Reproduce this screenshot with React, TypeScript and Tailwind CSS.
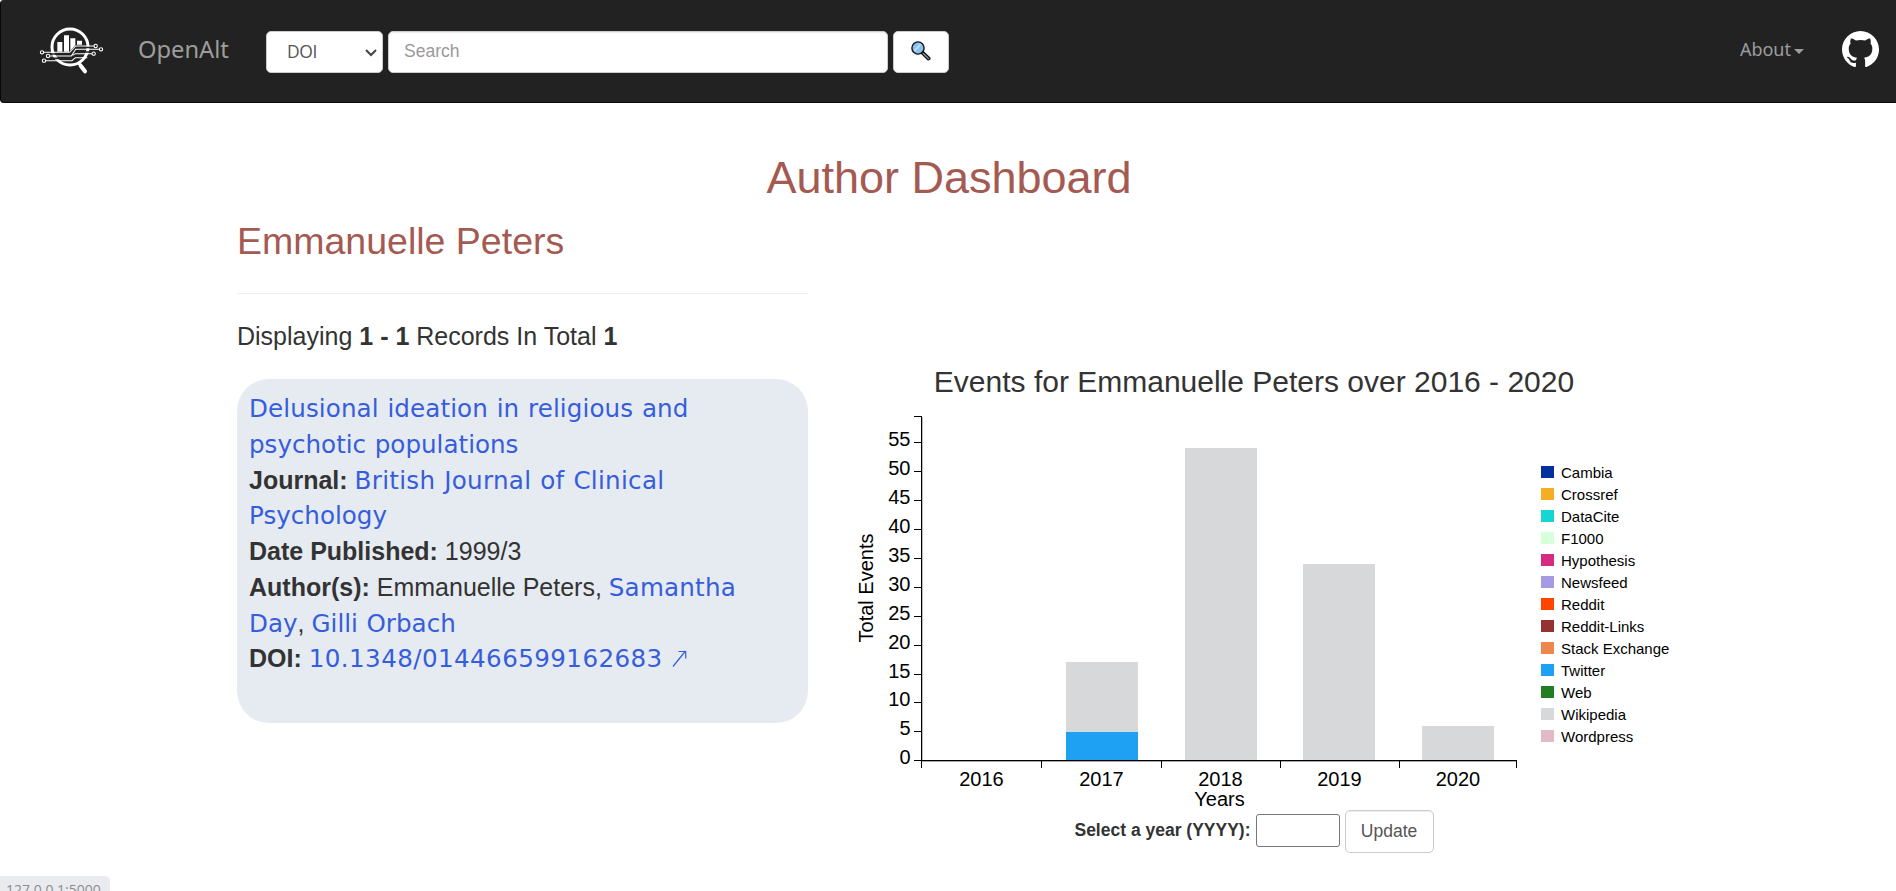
import React from "react";

const LINK = "font-['DejaVu_Sans',Verdana,sans-serif] text-[24.6px] leading-[0px] [word-spacing:0.8px] text-[#365ddc]";

const legend: [string, string][] = [
  ["Cambia", "#03309c"],
  ["Crossref", "#f4ae23"],
  ["DataCite", "#16d5d2"],
  ["F1000", "#d6ffdc"],
  ["Hypothesis", "#d52b80"],
  ["Newsfeed", "#a79ae4"],
  ["Reddit", "#ff4500"],
  ["Reddit-Links", "#953233"],
  ["Stack Exchange", "#ee874d"],
  ["Twitter", "#1ea1f3"],
  ["Web", "#237d22"],
  ["Wikipedia", "#d7d8da"],
  ["Wordpress", "#e2b9c8"],
];

const bars = [
  { x: 1066, top: 662, bottom: 732, fill: "#d7d8da" },
  { x: 1066, top: 732, bottom: 760, fill: "#1ea1f3" },
  { x: 1185, top: 448, bottom: 760, fill: "#d7d8da" },
  { x: 1303, top: 564, bottom: 760, fill: "#d7d8da" },
  { x: 1422, top: 726, bottom: 760, fill: "#d7d8da" },
];

const yTicks = [760, 731, 702, 674, 645, 616, 587, 558, 529, 500, 471, 442];
const xTicks = [921, 1041, 1161, 1280, 1399, 1516];
const years: [string, number][] = [
  ["2016", 981.5],
  ["2017", 1101.5],
  ["2018", 1220.5],
  ["2019", 1339.5],
  ["2020", 1458],
];

function Logo() {
  return (
    <svg className="h-[50px] w-[72px] shrink-0" viewBox="108 75 216 150" fill="none" stroke="#fff">
      <circle cx="210" cy="141" r="54" strokeWidth="9" />
      <path d="M236 190l7 6" strokeWidth="9" />
      <path d="M242 197l13 17" strokeWidth="12" strokeLinecap="round" />
      <g fill="#fff" stroke="none">
        <path d="M172 126h15v29h-15zM192 106h15v49h-15zM211 115h15v20l-15 17zM231 122h15v12h-15z" />
      </g>
      <path d="M150 162h59l20-20h60M138 175h74l17-19h50" stroke="#222" strokeWidth="5" />
      <g strokeWidth="3.2">
        <path d="M132 157h77l18-19h55M150 168h64l13-20h71M218 166l8-5h50M138 182h78l10-9h36" />
        <circle cx="126" cy="157" r="5" />
        <circle cx="144" cy="168" r="5" />
        <circle cx="132" cy="182" r="5" />
        <circle cx="287" cy="138" r="5" />
        <circle cx="303" cy="148" r="5" />
        <circle cx="281" cy="161" r="5" />
      </g>
    </svg>
  );
}

function SearchGlyph() {
  return (
    <svg className="h-5 w-5" viewBox="0 0 20 20" fill="none">
      <path d="M10.5 12.5l2-1.8 6.2 6c.9 1-.8 2.9-1.9 2z" fill="#64737c" stroke="#111" strokeWidth="1.2" />
      <path d="M12.2 12.6l5.2 5" stroke="#93a3ad" strokeWidth="1" />
      <circle cx="7" cy="7" r="6.1" fill="#87c1f0" stroke="#151515" strokeWidth="1.4" />
      <path d="M2.8 8.9L9 2.4l1.6 1L4 10.8z" fill="#b9dcf8" />
    </svg>
  );
}

function Navbar() {
  return (
    <header className="flex h-[103px] w-full items-start rounded-l border-b border-l border-[#080808] bg-[#222]">
      <div className="ml-[35px] mt-[25px] flex shrink-0">
        <Logo />
      </div>
      <span className="ml-[30px] mt-[32px] w-[96px] whitespace-nowrap font-['Noto_Sans',sans-serif] text-[23.7px] leading-[34px] text-[#9d9d9d]">
        OpenAlt
      </span>
      <div className="ml-[32px] mt-[31px] flex gap-[5px]">
        <div className="flex h-[42px] w-[117px] items-center justify-between rounded-[5px] border border-[#ccc] bg-white pl-5 pr-[5px] font-['Open_Sans',sans-serif] text-[17.5px] text-[#555]">
          <span className="-mt-0.5 tracking-[-0.4px]">DOI</span>
          <svg className="mt-0.5 h-3 w-3" viewBox="0 0 12 12" fill="none" stroke="#444" strokeWidth="2">
            <path d="M1 3l5 5 5-5" />
          </svg>
        </div>
        <input
          placeholder="Search"
          className="h-[42px] w-[500px] rounded-[5px] border border-[#ccc] bg-white px-[15px] pb-0.5 text-[17.5px] shadow-[inset_0_1px_1px_rgba(0,0,0,0.075)] placeholder:text-[#999]"
        />
        <button className="flex h-[42px] w-[56px] items-center justify-center rounded-[5px] border border-[#ccc] bg-white pb-0.5">
          <SearchGlyph />
        </button>
      </div>
      <div className="ml-auto mr-[17px] mt-[31px] flex">
        <span className="mt-[5px] font-['Noto_Sans',sans-serif] text-[18px] leading-[27px] text-[#9d9d9d]">About</span>
        <svg className="ml-[3px] mt-[18px] h-[5px] w-[10px]" viewBox="0 0 10 5">
          <path d="M0 0h10L5 5z" fill="#9d9d9d" />
        </svg>
        <svg className="ml-[38px] h-[37px] w-[37px]" viewBox="0 0 16 16" fill="#fff">
          <path d="M8 0C3.58 0 0 3.58 0 8c0 3.54 2.29 6.53 5.47 7.59.4.07.55-.17.55-.38 0-.19-.01-.82-.01-1.49-2.01.37-2.53-.49-2.69-.94-.09-.23-.48-.94-.82-1.13-.28-.15-.68-.52-.01-.53.63-.01 1.08.58 1.23.82.72 1.21 1.87.87 2.33.66.07-.52.28-.87.51-1.07-1.78-.2-3.64-.89-3.64-3.95 0-.87.31-1.59.82-2.15-.08-.2-.36-1.02.08-2.12 0 0 .67-.21 2.2.82.64-.18 1.32-.27 2-.27s1.36.09 2 .27c1.53-1.04 2.2-.82 2.2-.82.44 1.1.16 1.92.08 2.12.51.56.82 1.27.82 2.15 0 3.07-1.87 3.75-3.65 3.95.29.25.54.73.54 1.48 0 1.07-.01 1.93-.01 2.2 0 .21.15.46.55.38A8.01 8.01 0 0 0 16 8c0-4.42-3.58-8-8-8z" />
        </svg>
      </div>
    </header>
  );
}

function Record() {
  return (
    <article className="mt-[25px] h-[344px] w-[571px] whitespace-nowrap rounded-[32px] bg-[#e6ebf2] pl-3 pt-3 text-[25px] leading-[35.75px]">
      <a className={`${LINK} tracking-[0.1px]`}>Delusional ideation in religious and</a>
      <br />
      <a className={LINK}>psychotic populations</a>
      <br />
      <b>Journal:</b> <a className={`${LINK} tracking-[0.29px]`}>British Journal of Clinical</a>
      <br />
      <a className={LINK}>Psychology</a>
      <br />
      <b>Date Published:</b> 1999/3
      <br />
      <b>Author(s):</b> Emmanuelle Peters, <a className={`${LINK} tracking-[0.2px]`}>Samantha</a>
      <br />
      <a className={LINK}>Day</a>, <a className={LINK}>Gilli Orbach</a>
      <br />
      <b>DOI:</b> <a className={`${LINK} tracking-[0.4px]`}>10.1348/014466599162683</a>
      <svg className="ml-[9px] inline-block h-[17px] w-[15px] align-baseline" viewBox="0 0 15 17" fill="none" stroke="#365ddc" strokeWidth="1.2">
        <path d="M1 16.5L13.5 1M6.5 1.5h7.2v7" />
      </svg>
    </article>
  );
}

function Chart() {
  return (
    <svg className="block h-[406px] w-[832px]" viewBox="843 404 832 406" fontSize="20" fill="#000">
      {bars.map((b, i) => (
        <rect key={i} x={b.x} y={b.top} width="72" height={b.bottom - b.top} fill={b.fill} />
      ))}
      <g shapeRendering="crispEdges">
        <path d="M922 417h1v343h-1z" fill="#bbb" />
        <path d="M921 761h596v1H921z" fill="#aaa" />
        <path d="M921 416h1v345h-1zM921 760h596v1H921z" />
        <path d="M914 416h8v1h-8z" />
        {yTicks.map((y) => (
          <rect key={y} x="914" y={y} width="8" height="1" />
        ))}
        {xTicks.map((x) => (
          <rect key={x} x={x} y="760" width="1" height="8" />
        ))}
      </g>
      {yTicks.map((y, i) => (
        <text key={y} x="910.5" y={y + 4} textAnchor="end">
          {i * 5}
        </text>
      ))}
      {years.map(([label, x]) => (
        <text key={label} x={x} y="786" textAnchor="middle">
          {label}
        </text>
      ))}
      <text x="1219.5" y="806" textAnchor="middle">
        Years
      </text>
      <text transform="translate(873 588) rotate(-90)" textAnchor="middle">
        Total Events
      </text>
      {legend.map(([label, color], i) => (
        <g key={label}>
          <rect x="1541" y={466 + i * 22} width="13" height="12" fill={color} />
          <text x="1561" y={478 + i * 22} fontSize="15">
            {label}
          </text>
        </g>
      ))}
    </svg>
  );
}

export default function App() {
  return (
    <div className="flex h-[891px] w-full flex-col overflow-hidden bg-white font-['Liberation_Sans',Arial,sans-serif] text-[#333]">
      <Navbar />
      <main className="flex-1 pl-[239px] pr-[237px]">
        <h1 className="mt-[50px] text-center text-[45px] leading-[50px] text-[#a45a52]">Author Dashboard</h1>
        <div className="-ml-0.5 flex items-start">
          <section className="w-[571px] shrink-0">
            <h2 className="mt-[18px] text-[37.5px] leading-[41px] text-[#a45a52]">Emmanuelle Peters</h2>
            <hr className="mt-[31px] border-[#eee]" />
            <p className="mt-[24px] text-[25px] leading-[36px]">
              Displaying <b>1 - 1</b> Records In Total <b>1</b>
            </p>
            <Record />
          </section>
          <section className="ml-[35px] mt-[162px] flex w-[822px] shrink-0 flex-col items-center">
            <h3 className="text-[30px] leading-[33px]">Events for Emmanuelle Peters over 2016 - 2020</h3>
            <div className="mt-1.5 w-[822px]">
              <Chart />
            </div>
            <form className="flex items-center text-[17.5px]">
              <label className="mr-[5px] pb-0.5 font-bold">Select a year (YYYY):</label>
              <input className="mb-[3px] h-[33px] w-[84px] rounded-[3px] border border-[#767676] bg-white" />
              <button type="button" className="ml-[5px] h-[43px] w-[89px] rounded-[5px] border border-[#ccc] bg-white text-[#555] shadow-[inset_0_1px_1px_rgba(0,0,0,0.075)]">
                Update
              </button>
            </form>
          </section>
        </div>
      </main>
      <div className="fixed bottom-0 left-0 h-[15px] w-[110px] overflow-hidden rounded-tr-[5px] bg-[#e9ebef] pl-1.5 pt-[4px] font-['Open_Sans',sans-serif] text-[14px] leading-[20px] text-[#8b8d90]">
        127.0.0.1:5000
      </div>
    </div>
  );
}
